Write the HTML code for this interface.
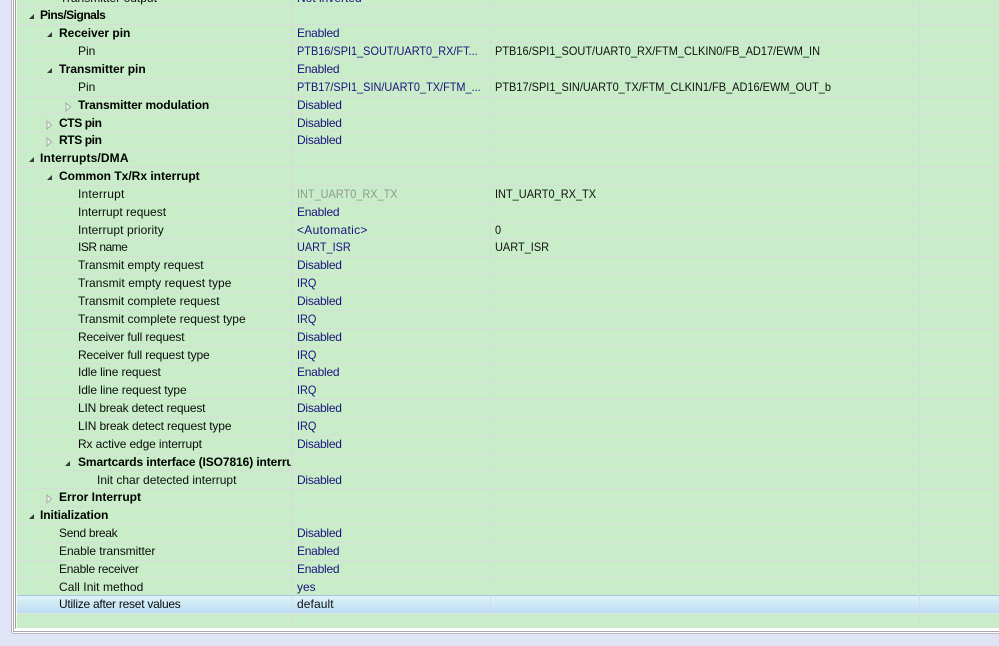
<!DOCTYPE html>
<html><head><meta charset="utf-8"><style>
html,body{margin:0;padding:0;width:999px;height:646px;overflow:hidden;background:#dfe5f6}
body{position:relative;font-family:"Liberation Sans",sans-serif;font-size:12px;color:#111}
#f1{position:absolute;left:11px;top:-5px;width:1000px;height:638px;background:#fff;border-left:1px solid #b4b4b8;border-bottom:1px solid #b8b8c4;border-bottom-left-radius:3px}
#f2{position:absolute;left:13px;top:-5px;width:1000px;height:636px;background:#fff;border-left:1px solid #a8a8a8;border-bottom:1px solid #a8a8a8}
#f3{position:absolute;left:15px;top:-5px;width:1000px;height:633px;background:#f4f6f4;border-left:1px solid #a0a0a0;border-bottom:1px solid #fff}
#g{position:absolute;left:17px;top:-12px;width:982px;height:640px;background:#c8edc8;overflow:hidden}
#t{position:absolute;left:-17px;top:12px;width:999px;height:628px}
.r{position:absolute;left:17px;width:982px;height:17.85px;top:calc(7.4px + 17.85px*var(--i));box-sizing:border-box;border-bottom:1px solid #d8dcd8;white-space:nowrap}
.c{position:absolute;top:0;height:17px;line-height:16.5px}
.n{left:0;width:274px;overflow:hidden;color:#0c0c0c}
.n span{position:absolute;top:0}
.v{left:280px;color:#1c1080}
.u{transform:scaleX(.91);transform-origin:0 0}
.w{left:478px;color:#111;transform:scaleX(.915);transform-origin:0 0}
.b{font-weight:bold;color:#000}
.s{background:linear-gradient(#def3f8,#bcdcf3);border-bottom-color:#dde3e6}
svg{position:absolute;top:0;width:10px;height:17px}
.o polygon{fill:#383838}
.x polygon{fill:#f2f6f2;stroke:#a4aaa4;stroke-width:1}
.l{position:absolute;top:0;bottom:0;width:1px;background:#d8dcd8}
</style></head><body>
<div id="f1"></div><div id="f2"></div><div id="f3"></div>
<div id="g"><div id="t">
<div class="r" style="--i:-1"><div class="c n"><span style="left:43px">Transmitter output</span></div><div class="c v">Not inverted</div></div>
<div class="r" style="--i:0"><div class="c n"><svg class="o" style="left:11px" viewBox="0 0 10 17"><polygon points="1,12 6,7 6,12"/></svg><span class="b" style="left:23px;letter-spacing:-.5px">Pins/Signals</span></div></div>
<div class="r" style="--i:1"><div class="c n"><svg class="o" style="left:29px" viewBox="0 0 10 17"><polygon points="1,12 6,7 6,12"/></svg><span class="b" style="left:42px">Receiver pin</span></div><div class="c v" style="letter-spacing:-.25px">Enabled</div></div>
<div class="r" style="--i:2"><div class="c n"><span style="left:61px">Pin</span></div><div class="c v u">PTB16/SPI1_SOUT/UART0_RX/FT...</div><div class="c w">PTB16/SPI1_SOUT/UART0_RX/FTM_CLKIN0/FB_AD17/EWM_IN</div></div>
<div class="r" style="--i:3"><div class="c n"><svg class="o" style="left:29px" viewBox="0 0 10 17"><polygon points="1,12 6,7 6,12"/></svg><span class="b" style="left:42px">Transmitter pin</span></div><div class="c v" style="letter-spacing:-.25px">Enabled</div></div>
<div class="r" style="--i:4"><div class="c n"><span style="left:61px">Pin</span></div><div class="c v u">PTB17/SPI1_SIN/UART0_TX/FTM_...</div><div class="c w">PTB17/SPI1_SIN/UART0_TX/FTM_CLKIN1/FB_AD16/EWM_OUT_b</div></div>
<div class="r" style="--i:5"><div class="c n"><svg class="x" style="left:47px" viewBox="0 0 10 17"><polygon points="2,6 6.5,10 2,14"/></svg><span class="b" style="left:61px;letter-spacing:-.1px">Transmitter modulation</span></div><div class="c v" style="letter-spacing:-.25px">Disabled</div></div>
<div class="r" style="--i:6"><div class="c n"><svg class="x" style="left:28px" viewBox="0 0 10 17"><polygon points="2,6 6.5,10 2,14"/></svg><span class="b" style="left:42px;letter-spacing:-.4px">CTS pin</span></div><div class="c v" style="letter-spacing:-.25px">Disabled</div></div>
<div class="r" style="--i:7"><div class="c n"><svg class="x" style="left:28px" viewBox="0 0 10 17"><polygon points="2,6 6.5,10 2,14"/></svg><span class="b" style="left:42px;letter-spacing:-.4px">RTS pin</span></div><div class="c v" style="letter-spacing:-.25px">Disabled</div></div>
<div class="r" style="--i:8"><div class="c n"><svg class="o" style="left:11px" viewBox="0 0 10 17"><polygon points="1,12 6,7 6,12"/></svg><span class="b" style="left:23px;letter-spacing:.14px">Interrupts/DMA</span></div></div>
<div class="r" style="--i:9"><div class="c n"><svg class="o" style="left:29px" viewBox="0 0 10 17"><polygon points="1,12 6,7 6,12"/></svg><span class="b" style="left:42px">Common Tx/Rx interrupt</span></div></div>
<div class="r" style="--i:10"><div class="c n"><span style="left:61px;letter-spacing:.2px">Interrupt</span></div><div class="c v u" style="color:#8f9a8f">INT_UART0_RX_TX</div><div class="c w">INT_UART0_RX_TX</div></div>
<div class="r" style="--i:11"><div class="c n"><span style="left:61px">Interrupt request</span></div><div class="c v" style="letter-spacing:-.25px">Enabled</div></div>
<div class="r" style="--i:12"><div class="c n"><span style="left:61px;letter-spacing:.1px">Interrupt priority</span></div><div class="c v" style="letter-spacing:.3px">&lt;Automatic&gt;</div><div class="c w">0</div></div>
<div class="r" style="--i:13"><div class="c n"><span style="left:61px;letter-spacing:-.5px">ISR name</span></div><div class="c v u">UART_ISR</div><div class="c w">UART_ISR</div></div>
<div class="r" style="--i:14"><div class="c n"><span style="left:61px">Transmit empty request</span></div><div class="c v" style="letter-spacing:-.25px">Disabled</div></div>
<div class="r" style="--i:15"><div class="c n"><span style="left:61px;letter-spacing:.07px">Transmit empty request type</span></div><div class="c v u">IRQ</div></div>
<div class="r" style="--i:16"><div class="c n"><span style="left:61px">Transmit complete request</span></div><div class="c v" style="letter-spacing:-.25px">Disabled</div></div>
<div class="r" style="--i:17"><div class="c n"><span style="left:61px">Transmit complete request type</span></div><div class="c v u">IRQ</div></div>
<div class="r" style="--i:18"><div class="c n"><span style="left:61px;letter-spacing:-.14px">Receiver full request</span></div><div class="c v" style="letter-spacing:-.25px">Disabled</div></div>
<div class="r" style="--i:19"><div class="c n"><span style="left:61px;letter-spacing:-.15px">Receiver full request type</span></div><div class="c v u">IRQ</div></div>
<div class="r" style="--i:20"><div class="c n"><span style="left:61px;letter-spacing:-.12px">Idle line request</span></div><div class="c v" style="letter-spacing:-.25px">Enabled</div></div>
<div class="r" style="--i:21"><div class="c n"><span style="left:61px;letter-spacing:-.1px">Idle line request type</span></div><div class="c v u">IRQ</div></div>
<div class="r" style="--i:22"><div class="c n"><span style="left:61px;letter-spacing:-.17px">LIN break detect request</span></div><div class="c v" style="letter-spacing:-.25px">Disabled</div></div>
<div class="r" style="--i:23"><div class="c n"><span style="left:61px;letter-spacing:-.14px">LIN break detect request type</span></div><div class="c v u">IRQ</div></div>
<div class="r" style="--i:24"><div class="c n"><span style="left:61px;letter-spacing:-.12px">Rx active edge interrupt</span></div><div class="c v" style="letter-spacing:-.25px">Disabled</div></div>
<div class="r" style="--i:25"><div class="c n"><svg class="o" style="left:47px" viewBox="0 0 10 17"><polygon points="1,12 6,7 6,12"/></svg><span class="b" style="left:61px;letter-spacing:-.1px">Smartcards interface (ISO7816) interrupt</span></div></div>
<div class="r" style="--i:26"><div class="c n"><span style="left:80px">Init char detected interrupt</span></div><div class="c v" style="letter-spacing:-.25px">Disabled</div></div>
<div class="r" style="--i:27"><div class="c n"><svg class="x" style="left:28px" viewBox="0 0 10 17"><polygon points="2,6 6.5,10 2,14"/></svg><span class="b" style="left:42px">Error Interrupt</span></div></div>
<div class="r" style="--i:28"><div class="c n"><svg class="o" style="left:11px" viewBox="0 0 10 17"><polygon points="1,12 6,7 6,12"/></svg><span class="b" style="left:23px;letter-spacing:-.08px">Initialization</span></div></div>
<div class="r" style="--i:29"><div class="c n"><span style="left:42px;letter-spacing:-.3px">Send break</span></div><div class="c v" style="letter-spacing:-.25px">Disabled</div></div>
<div class="r" style="--i:30"><div class="c n"><span style="left:42px;letter-spacing:-.06px">Enable transmitter</span></div><div class="c v" style="letter-spacing:-.25px">Enabled</div></div>
<div class="r" style="--i:31"><div class="c n"><span style="left:42px;letter-spacing:-.25px">Enable receiver</span></div><div class="c v" style="letter-spacing:-.25px">Enabled</div></div>
<div class="r" style="--i:32;border-bottom-color:#a9c3e2"><div class="c n"><span style="left:42px;letter-spacing:.06px">Call Init method</span></div><div class="c v">yes</div></div>
<div class="r s" style="--i:33"><div class="c n"><span style="left:42px;letter-spacing:-.25px">Utilize after reset values</span></div><div class="c v" style="color:#111;letter-spacing:.1px">default</div></div>
<div class="l" style="left:291px"></div>
<div class="l" style="left:490px"></div>
<div class="l" style="left:919px"></div>
</div></div>
</body></html>
